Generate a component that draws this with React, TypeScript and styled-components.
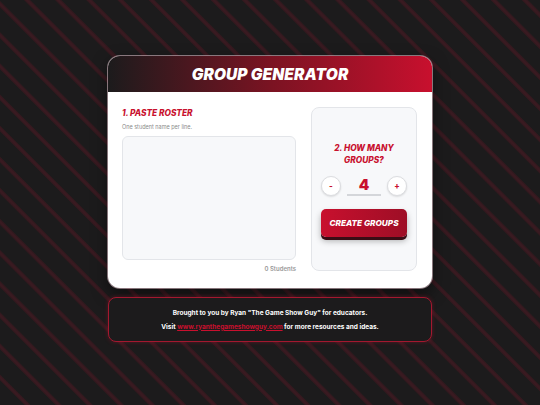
import styled, { createGlobalStyle } from 'styled-components';

const GlobalStyle = createGlobalStyle`
  html, body {
    margin: 0;
    padding: 0;
  }
  body {
    width: 540px;
    height: 405px;
    overflow: hidden;
    font-family: 'Inter', 'Liberation Sans', sans-serif;
    background-color: #1c1b1c;
    background-image: repeating-linear-gradient(
      45deg,
      #1c1b1c 0px,
      #1c1b1c 17px,
      #2e191d 17.5px,
      #3a1a21 19px,
      #3a1a21 20px,
      #2e191d 21.5px,
      #1c1b1c 22px
    );
  }
`;

const Page = styled.div`
  display: flex;
  flex-direction: column;
  align-items: center;
  gap: 9px;
  padding-top: 56px;
`;

const Card = styled.div`
  width: 324px;
  background: #ffffff;
  border-radius: 12px;
  overflow: hidden;
  box-shadow: 0 0 0 1px rgba(230, 200, 210, 0.55), 0 6px 16px rgba(0, 0, 0, 0.5);
`;

const Header = styled.div`
  height: 36px;
  display: flex;
  align-items: center;
  justify-content: center;
  background: linear-gradient(90deg, #1c1b1c 0%, #7a1322 50%, #c8102e 100%);
`;

const Title = styled.h1`
  margin: 0;
  font-family: 'Inter', 'DejaVu Sans', sans-serif;
  font-size: 15.5px;
  font-weight: 900;
  font-style: italic;
  letter-spacing: 0.1px;
  color: #ffffff;
`;

const Body = styled.div`
  display: flex;
  gap: 15px;
  padding: 15px 15px 16px 14px;
`;

const Column = styled.div`
  flex: 1;
  display: flex;
  flex-direction: column;
`;

const StepTitle = styled.h2<{ $center?: boolean }>`
  margin: 0;
  font-family: 'Inter', 'DejaVu Sans', sans-serif;
  font-size: 8.3px;
  line-height: 12px;
  font-weight: 800;
  font-style: italic;
  color: #c8102e;
  text-align: ${(p) => (p.$center ? 'center' : 'left')};
`;

const Hint = styled.p`
  margin: 5px 0 0;
  font-size: 5.5px;
  color: #8a8a8a;
`;

const Roster = styled.textarea`
  margin-top: 6px;
  height: 124px;
  box-sizing: border-box;
  width: 100%;
  resize: none;
  background: #f7f8fa;
  border: 1px solid #e3e5e9;
  border-radius: 6px;
  outline: none;
`;

const Count = styled.div`
  margin-top: 5px;
  text-align: right;
  font-size: 6px;
  font-weight: 600;
  color: #9a9a9a;
`;

const Panel = styled.div`
  width: 106px;
  box-sizing: border-box;
  height: 164px;
  padding: 0 10px;
  background: #f7f8fa;
  border: 1px solid #e3e5e9;
  border-radius: 8px;
  display: flex;
  flex-direction: column;
  align-items: center;
  justify-content: center;
`;

const Stepper = styled.div`
  margin-top: 10px;
  display: flex;
  align-items: center;
  gap: 6px;
`;

const RoundBtn = styled.button`
  width: 20px;
  height: 20px;
  padding: 0;
  border-radius: 50%;
  border: 1px solid #dcdde0;
  background: #ffffff;
  box-shadow: 0 1px 2px rgba(0, 0, 0, 0.12);
  color: #c8102e;
  font-family: 'Inter', sans-serif;
  font-size: 8px;
  font-weight: 800;
  display: flex;
  align-items: center;
  justify-content: center;
`;

const Value = styled.div`
  width: 34px;
  height: 20px;
  box-sizing: border-box;
  border-bottom: 2px solid #d4d6da;
  text-align: center;
  font-family: 'Inter', sans-serif;
  font-size: 15px;
  line-height: 17px;
  font-weight: 900;
  color: #c8102e;
`;

const CreateBtn = styled.button`
  margin-top: 13px;
  width: 86px;
  height: 28px;
  border: none;
  border-radius: 5px;
  background: linear-gradient(90deg, #c8102e 0%, #9e0e26 100%);
  box-shadow: 0 3px 0 #3a0d15, 0 4px 6px rgba(0, 0, 0, 0.3);
  color: #ffffff;
  font-family: 'Inter', sans-serif;
  font-size: 8.2px;
  font-weight: 800;
  font-style: italic;
  padding: 0;
`;

const Footer = styled.div`
  width: 324px;
  height: 45px;
  box-sizing: border-box;
  border: 1px solid #a3182f;
  border-radius: 8px;
  background: #1c1b1c;
  box-shadow: 0 0 4px rgba(200, 16, 46, 0.35);
  display: flex;
  flex-direction: column;
  align-items: center;
  justify-content: center;
  gap: 6px;
  color: #ffffff;
  font-family: 'Inter', 'Liberation Sans', sans-serif;
  font-size: 6.5px;
  font-weight: 700;
`;

const FooterLine = styled.div`
  line-height: 8px;
`;

const Link = styled.a`
  color: #c8102e;
  text-decoration: underline;
`;

export default function App(): JSX.Element {
  return (
    <>
      <GlobalStyle />
      <Page>
        <Card>
          <Header>
            <Title>GROUP GENERATOR</Title>
          </Header>
          <Body>
            <Column>
              <StepTitle>1. PASTE ROSTER</StepTitle>
              <Hint>One student name per line.</Hint>
              <Roster />
              <Count>0 Students</Count>
            </Column>
            <Panel>
              <StepTitle $center>
                2. HOW MANY
                <br />
                GROUPS?
              </StepTitle>
              <Stepper>
                <RoundBtn>-</RoundBtn>
                <Value>4</Value>
                <RoundBtn>+</RoundBtn>
              </Stepper>
              <CreateBtn>CREATE GROUPS</CreateBtn>
            </Panel>
          </Body>
        </Card>
        <Footer>
          <FooterLine>Brought to you by Ryan "The Game Show Guy" for educators.</FooterLine>
          <FooterLine>
            Visit <Link href="#">www.ryanthegameshowguy.com</Link> for more resources and ideas.
          </FooterLine>
        </Footer>
      </Page>
    </>
  );
}
